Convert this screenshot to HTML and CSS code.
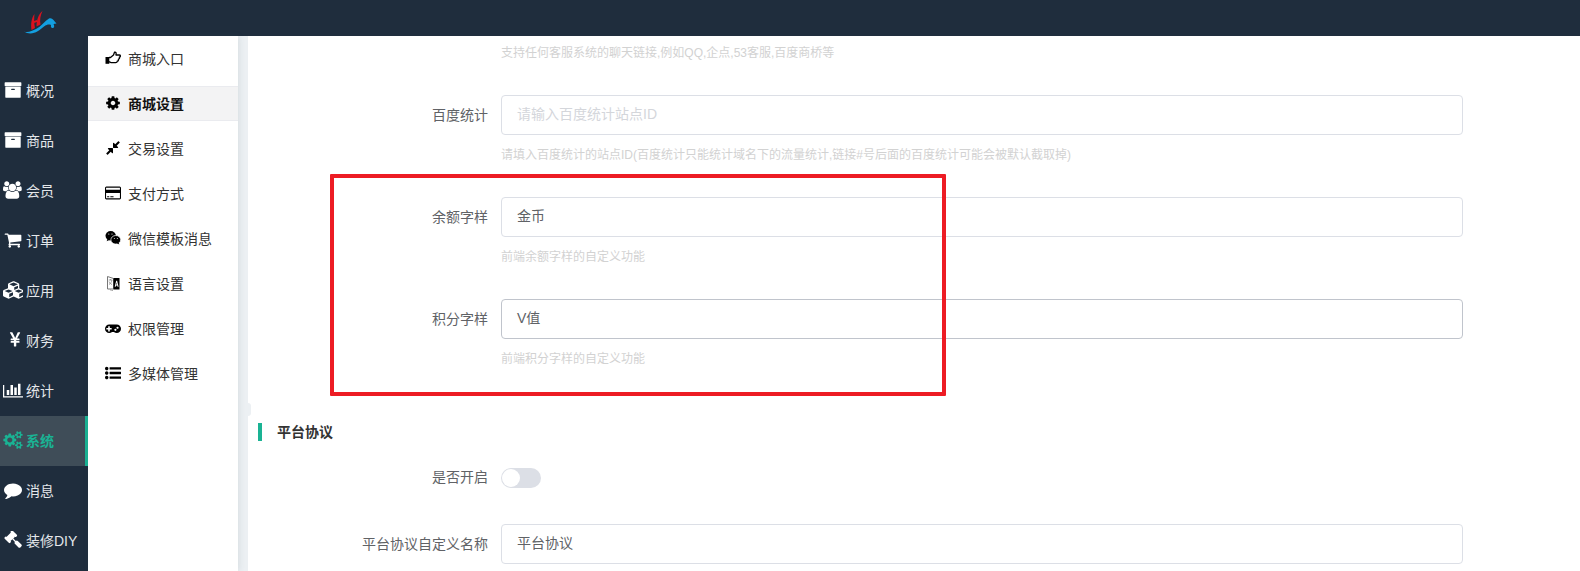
FILE: index.html
```html
<!DOCTYPE html>
<html lang="zh-CN">
<head>
<meta charset="utf-8">
<title>商城设置</title>
<link rel="stylesheet" href="styles.css">
</head>
<body>
<svg class="defs" width="0" height="0" aria-hidden="true">
  <symbol id="i-archive" viewBox="0 0 1792 1792"><path d="M1088 832q0-26-19-45t-45-19h-256q-26 0-45 19t-19 45 19 45 45 19h256q26 0 45-19t19-45zm576-192v960q0 26-19 45t-45 19h-1408q-26 0-45-19t-19-45v-960q0-26 19-45t45-19h1408q26 0 45 19t19 45zm64-448v256q0 26-19 45t-45 19h-1536q-26 0-45-19t-19-45v-256q0-26 19-45t45-19h1536q26 0 45 19t19 45z"/></symbol>
  <symbol id="i-users" viewBox="0 0 2048 1792"><path d="M593 896q-162 5-265 128h-134q-82 0-138-40.500t-56-118.500q0-353 124-353 6 0 43.500 21t97.500 42.500 119 21.500q67 0 133-23-5 37-5 66 0 139 81 256zm1071 637q0 120-73 189.500t-194 69.500h-874q-121 0-194-69.500t-73-189.500q0-53 3.500-103.500t14-109 26.500-108.500 43-97.500 62-81 85.500-53.500 111.500-20q10 0 43 21.500t73 48 107 48 135 21.500 135-21.500 107-48 73-48 43-21.500q61 0 111.500 20t85.500 53.500 62 81 43 97.500 26.500 108.500 14 109 3.500 103.500zm-1024-1277q0 106-75 181t-181 75-181-75-75-181 75-181 181-75 181 75 75 181zm704 384q0 159-112.500 271.500t-271.500 112.500-271.500-112.500-112.500-271.500 112.500-271.500 271.500-112.500 271.500 112.500 112.500 271.500zm576 225q0 78-56 118.500t-138 40.500h-134q-103-123-265-128 81-117 81-256 0-29-5-66 66 23 133 23 59 0 119-21.500t97.500-42.500 43.500-21q124 0 124 353zm-128-609q0 106-75 181t-181 75-181-75-75-181 75-181 181-75 181 75 75 181z"/></symbol>
  <symbol id="i-cart" viewBox="0 0 1792 1792"><path d="M704 1536q0 52-38 90t-90 38-90-38-38-90 38-90 90-38 90 38 38 90zm896 0q0 52-38 90t-90 38-90-38-38-90 38-90 90-38 90 38 38 90zm128-1088v512q0 24-16.500 42.500t-40.500 21.500l-1044 122q13 60 13 70 0 16-24 64h920q26 0 45 19t19 45-19 45-45 19h-1024q-26 0-45-19t-19-45q0-11 8-31.500t16-36 21.500-40 15.500-29.500l-177-823h-204q-26 0-45-19t-19-45 19-45 45-19h256q16 0 28.500 6.500t19.500 15.500 13 24.500 8 26 5.500 29.500 4.500 26h1201q26 0 45 19t19 45z"/></symbol>
  <symbol id="i-cubes" viewBox="0 0 2048 1792"><path d="M640 1632l384-192v-314l-384 164v342zm-64-454l404-173-404-173-404 173zm1088 454l384-192v-314l-384 164v342zm-64-454l404-173-404-173-404 173zm-448-293l384-165v-266l-384 164v267zm-64-379l441-189-441-189-441 189zm1088 518v416q0 36-19 67t-52 47l-448 224q-25 14-57 14t-57-14l-448-224q-4-2-7-4-2 2-7 4l-448 224q-25 14-57 14t-57-14l-448-224q-33-16-52-47t-19-67v-416q0-38 21.500-70t56.500-48l434-186v-400q0-38 21.500-70t56.500-48l448-192q23-10 50-10t50 10l448 192q35 16 56.500 48t21.500 70v400l434 186q36 16 57 48t21 70z"/></symbol>
  <symbol id="i-yen" viewBox="0 0 1024 1792"><path d="M985 1536h-172q-13 0-22.500-9t-9.500-23v-330h-288q-13 0-22.500-9t-9.500-23v-103q0-13 9.500-22.500t22.500-9.500h288v-85h-288q-13 0-22.500-9t-9.500-23v-104q0-13 9.500-22.500t22.500-9.500h214l-321-578q-8-16 0-32 10-16 28-16h194q19 0 29 18l215 425q19 38 56 125 10-24 30.500-68t27.500-61l191-420q8-19 29-19h191q17 0 27 16 9 14 1 31l-313 579h215q13 0 22.500 9.500t9.500 22.500v104q0 14-9.500 23t-22.500 9h-290v85h290q13 0 22.500 9.500t9.500 22.500v103q0 14-9.500 23t-22.500 9h-290v330q0 13-9.500 22.500t-22.500 9.500z" transform="translate(-180 0)"/></symbol>
  <symbol id="i-chart" viewBox="0 0 2048 1792"><path d="M640 896v512h-256v-512h256zm384-512v1024h-256v-1024h256zm1024 1152v128h-2048v-1280h128v1152h1920zm-640-896v768h-256v-768h256zm384-384v1152h-256v-1152h256z"/></symbol>
  <symbol id="i-cogs" viewBox="0 0 1920 1792"><path d="M896 896q0-106-75-181t-181-75-181 75-75 181 75 181 181 75 181-75 75-181zm768 512q0-52-38-90t-90-38-90 38-38 90q0 53 37.500 90.500t90.500 37.500 90.500-37.500 37.500-90.500zm0-1024q0-52-38-90t-90-38-90 38-38 90q0 53 37.500 90.500t90.500 37.500 90.500-37.500 37.500-90.500zm-384 421v185q0 10-7 19.500t-16 10.500l-155 24q-11 35-32 76 34 48 90 115 7 11 7 20 0 12-7 19-23 30-82.500 89.500t-78.500 59.500q-11 0-21-7l-115-90q-37 19-77 31-11 108-23 155-7 24-30 24h-186q-11 0-20-7.500t-10-17.500l-23-153q-34-10-75-31l-118 89q-7 7-20 7-11 0-21-8-144-133-144-160 0-9 7-19 10-14 41-53t47-61q-23-44-35-82l-152-24q-10-1-17-9.500t-7-19.500v-185q0-10 7-19.500t16-10.500l155-24q11-35 32-76-34-48-90-115-7-11-7-20 0-12 7-20 22-30 82-89t79-59q11 0 21 7l115 90q34-18 77-32 11-108 23-154 7-24 30-24h186q11 0 20 7.500t10 17.500l23 153q34 10 75 31l118-89q8-7 20-7 11 0 21 8 144 133 144 160 0 8-7 19-12 16-42 54t-45 60q23 48 34 82l152 23q10 2 17 10.500t7 19.500zm640 533v140q0 16-149 31-12 27-30 52 51 113 51 138 0 4-4 7-122 71-124 71-8 0-46-47t-52-68q-20 2-30 2t-30-2q-14 21-52 68t-46 47q-2 0-124-71-4-3-4-7 0-25 51-138-18-25-30-52-149-15-149-31v-140q0-16 149-31 13-29 30-52-51-113-51-138 0-4 4-7 4-2 35-20t59-34 30-16q8 0 46 46.500t52 67.500q20-2 30-2t30 2q51-71 92-112l6-2q4 0 124 70 4 3 4 7 0 25-51 138 17 23 30 52 149 15 149 31zm0-1024v140q0 16-149 31-12 27-30 52 51 113 51 138 0 4-4 7-122 71-124 71-8 0-46-47t-52-68q-20 2-30 2t-30-2q-14 21-52 68t-46 47q-2 0-124-71-4-3-4-7 0-25 51-138-18-25-30-52-149-15-149-31v-140q0-16 149-31 13-29 30-52-51-113-51-138 0-4 4-7 4-2 35-20t59-34 30-16q8 0 46 46.500t52 67.500q20-2 30-2t30 2q51-71 92-112l6-2q4 0 124 70 4 3 4 7 0 25-51 138 17 23 30 52 149 15 149 31z"/></symbol>
  <symbol id="i-comment" viewBox="0 0 1792 1792"><path d="M1792 896q0 174-120 321.500t-326 233-450 85.500q-70 0-145-8-198 175-460 242-49 14-114 22-17 2-30.500-9t-17.500-29v-1q-3-4-.5-12t2-10 4.500-9.500l6-9 7-8.500 8-9q7-8 31-34.500t34.500-38 31-39.500 32.500-51 27-59 26-76q-157-89-247.500-220t-90.500-281q0-130 71-248.500t191-204.500 286-136.500 348-50.500q244 0 450 85.500t326 233 120 321.500z"/></symbol>
  <symbol id="i-gavel" viewBox="0 0 1792 1792"><path d="M1771 1440q0 53-37 90l-107 108q-39 37-91 37-53 0-90-37l-363-364q-38-36-38-90 0-53 43-96l-256-256-126 126q-14 14-34 14t-34-14q2 2 12.500 12t12.500 13 10 11.500 10 13.500 6 13.500 5.500 16.500 1.500 18q0 38-28 68-3 3-16.500 18t-19 20.500-18.500 16.500-22 15.500-22 9-26 4.500q-40 0-68-28l-408-408q-28-28-28-68 0-13 4.500-26t9-22 15.500-22 16.500-18.500 20.500-19 18-16.500q30-28 68-28 10 0 18 1.500t16.500 5.500 13.500 6 13.500 10 11.500 10 13 12.500 12 12.500q-14-14-14-34t14-34l348-348q14-14 34-14t34 14q-2-2-12.500-12t-12.500-13-10-11.500-10-13.500-6-13.500-5.500-16.500-1.500-18q0-38 28-68 3-3 16.500-18t19-20.500 18.500-16.500 22-15.500 22-9 26-4.500q40 0 68 28l408 408q28 28 28 68 0 13-4.500 26t-9 22-15.500 22-16.500 18.500-20.500 19-18 16.500q-30 28-68 28-10 0-18-1.500t-16.500-5.500-13.500-6-13.500-10-11.500-10-13-12.500-12-12.500q14 14 14 34t-14 34l-126 126 256 256q43-43 96-43 52 0 91 37l363 363q37 39 37 91z"/></symbol>
  <symbol id="i-cog" viewBox="0 0 1792 1792"><path d="M1152 896q0-106-75-181t-181-75-181 75-75 181 75 181 181 75 181-75 75-181zm512-109v222q0 12-8 23t-20 13l-185 28q-19 54-39 91 35 50 107 138 10 12 10 25t-9 23q-27 37-99 108t-94 71q-12 0-26-9l-138-108q-44 23-91 38-16 136-29 186-7 28-36 28h-222q-14 0-24.500-8.500t-11.500-21.500l-28-184q-49-16-90-37l-141 107q-10 9-25 9-14 0-25-11-126-114-165-168-7-10-7-23 0-12 8-23 15-21 51-66.500t54-70.500q-27-50-41-99l-183-27q-13-2-21-12.500t-8-23.500v-222q0-12 8-23t19-13l186-28q14-46 39-92-40-57-107-138-10-12-10-24 0-10 9-23 26-36 98.500-107.500t94.500-71.500q13 0 26 10l138 107q44-23 91-38 16-136 29-186 7-28 36-28h222q14 0 24.500 8.500t11.500 21.500l28 184q49 16 90 37l142-107q9-9 24-9 13 0 25 10 129 119 165 170 7 8 7 22 0 12-8 23-15 21-51 66.500t-54 70.500q26 50 41 98l183 28q13 2 21 12.500t8 23.500z"/></symbol>
  <symbol id="i-compress" viewBox="0 0 1792 1792"><path d="M896 960v448q0 26-19 45t-45 19-45-19l-144-144-332 332q-10 10-23 10t-23-10l-114-114q-10-10-10-23t10-23l332-332-144-144q-19-19-19-45t19-45 45-19h448q26 0 45 19t19 45zm755-672q0 13-10 23l-332 332 144 144q19 19 19 45t-19 45-45 19h-448q-26 0-45-19t-19-45v-448q0-26 19-45t45-19 45 19l144 144 332-332q10-10 23-10t23 10l114 114q10 10 10 23z"/></symbol>
  <symbol id="i-card" viewBox="0 0 1920 1792"><path d="M1760 128q66 0 113 47t47 113v1216q0 66-47 113t-113 47h-1600q-66 0-113-47t-47-113v-1216q0-66 47-113t113-47h1600zm-1600 128q-13 0-22.500 9.500t-9.500 22.500v224h1664v-224q0-13-9.500-22.500t-22.500-9.500h-1600zm1600 1280q13 0 22.500-9.500t9.500-22.500v-608h-1664v608q0 13 9.500 22.500t22.500 9.500h1600zm-1504-128v-128h256v128h-256zm384 0v-128h384v128h-384z"/></symbol>
  <symbol id="i-gamepad" viewBox="0 0 1920 1792"><path d="M800 1056v-128q0-14-9-23t-23-9h-192v-192q0-14-9-23t-23-9h-128q-14 0-23 9t-9 23v192h-192q-14 0-23 9t-9 23v128q0 14 9 23t23 9h192v192q0 14 9 23t23 9h128q14 0 23-9t9-23v-192h192q14 0 23-9t9-23zm576 64q0-53-37.500-90.500t-90.500-37.500-90.500 37.500-37.500 90.500 37.500 90.500 90.500 37.500 90.500-37.500 37.500-90.500zm256-256q0-53-37.500-90.500t-90.500-37.500-90.500 37.500-37.500 90.500 37.500 90.500 90.500 37.500 90.500-37.500 37.500-90.500zm288 128q0 212-150 362t-362 150q-192 0-338-128h-220q-146 128-338 128-212 0-362-150t-150-362 150-362 362-150h896q212 0 362 150t150 362z"/></symbol>
  <symbol id="i-list" viewBox="0 0 1792 1792"><path d="M384 1408q0 80-56 136t-136 56-136-56-56-136 56-136 136-56 136 56 56 136zm0-512q0 80-56 136t-136 56-136-56-56-136 56-136 136-56 136 56 56 136zm1408 416v192q0 13-9.500 22.500t-22.500 9.500h-1216q-13 0-22.500-9.500t-9.500-22.500v-192q0-13 9.500-22.500t22.500-9.500h1216q13 0 22.500 9.500t9.500 22.500zm-1408-928q0 80-56 136t-136 56-136-56-56-136 56-136 136-56 136 56 56 136zm1408 416v192q0 13-9.500 22.500t-22.500 9.500h-1216q-13 0-22.500-9.500t-9.500-22.500v-192q0-13 9.500-22.500t22.500-9.500h1216q13 0 22.500 9.500t9.500 22.500zm0-512v192q0 13-9.500 22.500t-22.500 9.500h-1216q-13 0-22.500-9.500t-9.500-22.500v-192q0-13 9.500-22.500t22.500-9.500h1216q13 0 22.500 9.500t9.500 22.500z"/></symbol>
  <symbol id="i-hand" viewBox="0 0 16 16"><path d="M.5 7h3.800v6.800H.5z"/><path fill="none" stroke="currentColor" stroke-width="1.300" stroke-linejoin="round" d="M4 7.500h1.500L8.500 5l1-2.800c1.300-.5 2 .8 1.400 2.800H14.300c1.400 0 1.500 2 0 2.200.5 1 0 1.900-.9 2 .3 1-.3 1.900-1.200 2 0 1-.6 1.500-1.500 1.500H7c-1.300 0-2-.7-3-1"/></symbol>
  <symbol id="i-wechat" viewBox="0 0 16 16"><ellipse cx="5.700" cy="5.800" rx="5.200" ry="4.800"/><path d="M2.500 9l-.8 2.300 3-1.500z"/><ellipse cx="10.800" cy="9.800" rx="4.900" ry="4.300" stroke="#fff" stroke-width=".7"/><path d="M13.500 12.500l.8 2-2.500-1.200z"/><circle cx="3.800" cy="4" r=".6" fill="#fff"/><circle cx="7" cy="4" r=".6" fill="#fff"/><circle cx="9.300" cy="8.600" r=".5" fill="#fff"/><circle cx="12.300" cy="8.600" r=".5" fill="#fff"/></symbol>
  <symbol id="i-language" viewBox="0 0 16 16"><path fill="#fff" stroke="#777" stroke-width="1" d="M2.500 1.500l6 2v10.500h-6z"/><path fill="none" stroke="#888" stroke-width=".8" d="M3.700 5h3.500M5.400 4v1M4 9.500c1.500-1 2.600-2.500 3-4.500M4 6.500c.6 1.400 1.500 2.300 3 3M5 14.500l1.500 1.300 1.500-.3"/><path d="M8.500 3h6v11.500h-6z"/><path fill="#fff" d="M9.700 11.800l1.500-6h.9l1.500 6h-1l-.3-1.300h-1.300l-.3 1.300zm1.500-2.200h.9l-.45-2z"/></symbol>
</svg>

<header class="topbar"></header>

<div class="shell">
  <nav class="rail">
    <a class="rail-item"><svg class="rail-icon"><use href="#i-archive"/></svg><span>概况</span></a>
    <a class="rail-item"><svg class="rail-icon"><use href="#i-archive"/></svg><span>商品</span></a>
    <a class="rail-item"><svg class="rail-icon"><use href="#i-users"/></svg><span>会员</span></a>
    <a class="rail-item"><svg class="rail-icon"><use href="#i-cart"/></svg><span>订单</span></a>
    <a class="rail-item"><svg class="rail-icon"><use href="#i-cubes"/></svg><span>应用</span></a>
    <a class="rail-item"><svg class="rail-icon"><use href="#i-yen"/></svg><span>财务</span></a>
    <a class="rail-item"><svg class="rail-icon"><use href="#i-chart"/></svg><span>统计</span></a>
    <a class="rail-item is-active"><svg class="rail-icon"><use href="#i-cogs"/></svg><span>系统</span></a>
    <a class="rail-item"><svg class="rail-icon"><use href="#i-comment"/></svg><span>消息</span></a>
    <a class="rail-item"><svg class="rail-icon"><use href="#i-gavel"/></svg><span>装修DIY</span></a>
  </nav>

  <nav class="subnav">
    <a class="sub-item"><svg class="sub-icon"><use href="#i-hand"/></svg><span>商城入口</span></a>
    <a class="sub-item is-active"><svg class="sub-icon"><use href="#i-cog"/></svg><span>商城设置</span></a>
    <a class="sub-item"><svg class="sub-icon"><use href="#i-compress"/></svg><span>交易设置</span></a>
    <a class="sub-item"><svg class="sub-icon"><use href="#i-card"/></svg><span>支付方式</span></a>
    <a class="sub-item"><svg class="sub-icon"><use href="#i-wechat"/></svg><span>微信模板消息</span></a>
    <a class="sub-item"><svg class="sub-icon"><use href="#i-language"/></svg><span>语言设置</span></a>
    <a class="sub-item"><svg class="sub-icon"><use href="#i-gamepad"/></svg><span>权限管理</span></a>
    <a class="sub-item"><svg class="sub-icon"><use href="#i-list"/></svg><span>多媒体管理</span></a>
  </nav>

  <main class="content">
    <p class="hint hint-top">支持任何客服系统的聊天链接,例如QQ,企点,53客服,百度商桥等</p>

    <div class="field">
      <label class="field-label">百度统计</label>
      <div class="field-box"><div class="input is-placeholder">请输入百度统计站点ID</div></div>
    </div>
    <p class="hint">请填入百度统计的站点ID(百度统计只能统计域名下的流量统计,链接#号后面的百度统计可能会被默认截取掉)</p>

    <div class="field">
      <label class="field-label">余额字样</label>
      <div class="field-box"><div class="input">金币</div></div>
    </div>
    <p class="hint">前端余额字样的自定义功能</p>

    <div class="field">
      <label class="field-label">积分字样</label>
      <div class="field-box"><div class="input is-hover">V值</div></div>
    </div>
    <p class="hint">前端积分字样的自定义功能</p>

    <h2 class="section-title">平台协议</h2>

    <div class="field field-switch">
      <label class="field-label">是否开启</label>
      <div class="switch"><span class="switch-knob"></span></div>
    </div>

    <div class="field">
      <label class="field-label">平台协议自定义名称</label>
      <div class="field-box"><div class="input">平台协议</div></div>
    </div>
  </main>
</div>

<svg class="logo" viewBox="0 0 33 25" aria-hidden="true">
  <path fill="#d9121f" d="M10.500 4C7.500 8 6.500 14 7.500 20L11 18C10 13 10 8 10.500 4Z"/>
  <path fill="#d9121f" d="M18.500 1C14.500 4 12.500 10 12.500 16.500L16.500 14.500C15.500 10 16.500 5 18.500 1Z"/>
  <path fill="#d9121f" d="M10 11l3-1v2l-3 1z"/>
  <path fill="#139fe0" d="M0 21.500C4 23 8 21 12 19C17 16.500 21 11 25 8.500C28 7 30 10.500 32.500 13.500L29.500 14C30.500 15.500 30.500 17.500 29 18C27.500 18.500 26.500 17 27 15C25 14 23 14.500 20 16.500C15 20.500 10 25 3 23Z"/>
</svg>
<div class="callout"></div>
</body>
</html>
```
FILE: styles.css
```css
* { box-sizing: border-box; }
html, body { margin: 0; height: 100%; overflow: hidden; }
body {
  font-family: "Liberation Sans", "Noto Sans CJK SC", sans-serif;
  font-size: 14px;
  color: #333;
  background: #fff;
}
.defs { position: absolute; }
.topbar { height: 36px; background: #1f2d3d; }
.shell { display: flex; height: 535px; background: #ecf0f3; }

.rail {
  width: 88px;
  flex: none;
  background: #1f2d3d;
  padding-top: 30px;
}
.rail-item {
  display: flex;
  align-items: center;
  height: 50px;
  padding: 0 0 2px 3px;
  color: #e4e7ea;
}
.rail-icon { width: 20px; height: 18px; flex: none; fill: #fff; margin-right: 3px; }
.rail-item.is-active {
  background: #3f4d58;
  border-right: 3px solid #1ab394;
  color: #1ab394;
  font-weight: 700;
}
.rail-item.is-active .rail-icon { fill: #1ab394; }

.subnav {
  position: relative;
  z-index: 1;
  width: 150px;
  flex: none;
  background: #fff;
  padding-top: 5px;
  box-shadow: 1px 0 6px rgba(60, 80, 100, .12);
}
.sub-item {
  display: flex;
  align-items: center;
  height: 35px;
  margin-bottom: 10px;
  padding: 0 0 2px 17px;
  color: #333;
}
.sub-icon { width: 16px; height: 16px; flex: none; margin-right: 7px; fill: #000; color: #000; }
.sub-item.is-active {
  background: #f3f3f4;
  border-top: 1px solid #eaebef;
  border-bottom: 1px solid #eaebef;
  color: #111;
  font-weight: 700;
}

.content {
  flex: 1;
  min-width: 0;
  margin-left: 10px;
  background: #fff;
  padding: 8px 117px 0 0;
  overflow: hidden;
}
.hint {
  margin: 11px 0 33px 253px;
  height: 18px;
  font-size: 12px;
  line-height: 18px;
  color: #d2d2d2;
}
.hint-top { margin-top: 0; margin-bottom: 33px; }
.field { display: flex; align-items: center; height: 40px; }
.field-label {
  width: 240px;
  flex: none;
  margin-right: 13px;
  padding-bottom: 2px;
  text-align: right;
  color: #606266;
  white-space: nowrap;
}
.field-box { flex: 1; min-width: 0; }
.input {
  height: 40px;
  padding: 0 15px;
  line-height: 37px;
  border: 1px solid #dcdfe6;
  border-radius: 4px;
  color: #606266;
  background: #fff;
}
.input.is-placeholder { color: #d4d6db; }
.input.is-hover { border-color: #c0c4cc; }
.section-title {
  position: relative;
  margin: 55px 0 0 29px;
  height: 18px;
  font-size: 14px;
  line-height: 18px;
  font-weight: 700;
  color: #333;
}
.section-title::before {
  content: "";
  position: absolute;
  left: -19px;
  top: 0;
  width: 4px;
  height: 18px;
  background: #1ab394;
}
.section-title::after {
  content: "";
  position: absolute;
  left: -29px;
  top: -20px;
  width: 3px;
  height: 13px;
  background: #ecf0f3;
  border-radius: 0 3px 3px 0;
}
.field-switch { margin: 19px 0 28px; height: 36px; }
.field-switch .field-label { padding-bottom: 4px; }
.switch {
  position: relative;
  width: 40px;
  height: 20px;
  border-radius: 10px;
  background: #dcdfe6;
}
.switch-knob {
  position: absolute;
  left: 1px;
  top: 1px;
  width: 18px;
  height: 18px;
  border-radius: 50%;
  background: #fff;
}
.logo { position: absolute; left: 24px; top: 10px; width: 33px; height: 25px; }
.callout {
  position: absolute;
  left: 330px;
  top: 174px;
  width: 616px;
  height: 222px;
  border: 4px solid #ed1c24;
  border-radius: 1px;
  pointer-events: none;
}
```
